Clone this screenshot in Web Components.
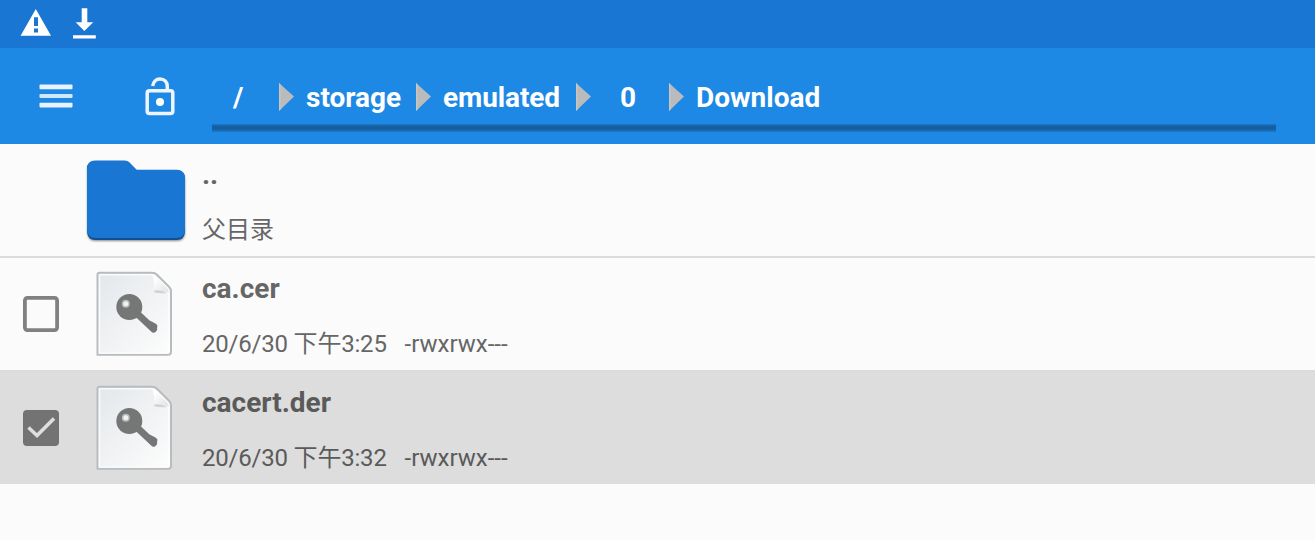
<!DOCTYPE html>
<html lang="zh-CN">
<head>
<meta charset="utf-8">
<title>Download</title>
<style>
body{margin:0;background:#fbfbfb;font-family:Roboto,"Noto Sans CJK SC",sans-serif;overflow:hidden}
.date{letter-spacing:-.2px}
</style>
</head>
<body>
<file-manager></file-manager>
<script>
function define(name, html){
  const t=document.createElement('template');
  t.innerHTML=html;
  customElements.define(name, class extends HTMLElement{
    constructor(){super();this.attachShadow({mode:'open'}).append(t.content.cloneNode(true));}
  });
}

define('status-bar',`
<style>
:host{display:flex;height:48px;background:#1976d2}
svg{display:block}
</style>
<svg width="110" height="48" viewBox="0 0 110 48" fill="#fff">
  <path fill-rule="evenodd" d="M35.8 9 51 35.8H20.6ZM34 17.3V26h4v-8.700ZM34 28.500v4h4v-4Z"/>
  <path d="M81.700 8.300h5.600v14h6L84.300 31l-8.600-8.700h6ZM73 35.200h22.800v3.300H73Z"/>
</svg>`);

define('menu-icon',`
<style>:host{display:block}svg{display:block}</style>
<svg width="34" height="24" viewBox="0 0 34 24" fill="#fff">
  <rect x=".5" y=".6" width="33" height="4.600" rx=".8" opacity=".9"/>
  <rect x=".5" y="9.900" width="33" height="4.200" rx=".8" opacity=".8"/>
  <rect x=".5" y="18.800" width="33" height="4.600" rx=".8" opacity=".9"/>
</svg>`);

define('lock-icon',`
<style>:host{display:block}svg{display:block}</style>
<svg width="32" height="40" viewBox="0 0 32 40" fill="none" stroke="#fff" stroke-opacity=".92" stroke-width="3.500">
  <rect x="3.200" y="14.800" width="25.600" height="22.700" rx="2.200"/>
  <path d="M8.700 10C9.200 5.800 12.100 2.900 16 2.900c4.300 0 7.300 3.200 7.300 7.500V13"/>
  <circle cx="16" cy="26" r="4" fill="#fff" stroke="none"/>
</svg>`);

define('path-crumb',`
<style>
:host{display:flex;align-items:center;box-sizing:border-box;height:34px;flex:none;color:#fff;font-size:28px;line-height:34px;font-weight:700;white-space:nowrap}
svg{display:block;flex:none;margin-right:var(--gap,12px)}
span{padding-top:2px}
:host([root]) svg{display:none}
</style>
<svg width="15" height="28" viewBox="0 0 15 28"><path d="M0 0 15 13.500 0 28Z" fill="#b9bbbd"/><path d="M0 0 1.500 1.200V26.500L0 28Z" fill="#c9c5c2"/></svg>
<span><slot></slot></span>`);

define('path-bar',`
<style>
:host{display:flex;box-sizing:border-box;height:96px;background:#1e88e5;padding-left:39px}
menu-icon{margin-top:36px}
lock-icon{margin:28px 0 0 71px}
nav{display:flex;align-items:center;box-sizing:border-box;width:1064px;height:84px;margin-left:36px;padding:17px 0 4px 21px;
background:linear-gradient(#1b79cc,#165f9f 30%,#165f9f 65%,#1b79cc) left bottom/100% 8px no-repeat}
</style>
<menu-icon></menu-icon><lock-icon></lock-icon>
<nav>
  <path-crumb root style="width:46px">/</path-crumb>
  <path-crumb style="width:137px">storage</path-crumb>
  <path-crumb style="width:160px;letter-spacing:-.1px">emulated</path-crumb>
  <path-crumb style="width:93px;--gap:29px">0</path-crumb>
  <path-crumb>Download</path-crumb>
</nav>`);

define('folder-icon',`
<style>:host{display:block}svg{display:block}</style>
<svg width="112" height="112" viewBox="2 0 112 112">
  <defs><filter id="s" x="-10%" y="-10%" width="120%" height="125%"><feGaussianBlur stdDeviation="1.300"/></filter></defs>
  <path d="M15 18.500h32.500q2 0 3.500 1.500l7.500 7.500H99q8 .5 8 8.500v52q0 9-8 9H17.500q-8 0-8-9V26q0-7.500 7.500-8.500Z" fill="#555" opacity=".7" filter="url(#s)"/>
  <path d="M17.500 17h29q3 0 4.500 1.500l7.500 7.500h40.500q8 .5 8 9v51.500q0 9.500-8.500 9.500h-81q-8.500 0-8.500-9.500V25q0-8 8.500-8Z" fill="#104f8f"/>
  <path d="M17.500 16.500h29q3 0 4.500 1.500l7.500 7.800h40.500q8 .5 8 8.500V85q0 9-8.500 9h-81q-8.500 0-8.500-9V25q0-8.500 8.500-8.500Z" fill="#1976d2"/>
</svg>`);

define('key-file-icon',`
<style>:host{display:block}svg{display:block}</style>
<svg width="112" height="112" viewBox="2 0 112 112">
  <defs>
    <linearGradient id="p" x1="0" y1="0" x2="1" y2="1"><stop stop-color="#e3e7ea"/><stop offset=".55" stop-color="#f2f3f5"/><stop offset="1" stop-color="#fdfdfd"/></linearGradient>
    <linearGradient id="c" x1="0" y1="0" x2="1" y2="1"><stop offset=".2" stop-color="#fff"/><stop offset="1" stop-color="#dfe1e2"/></linearGradient>
  </defs>
  <path d="M21.500 14.700H74q3 0 5 2l12 12q2 2 2 5v60q0 3-3 3H19.500V16.700q0-2 2-2Z" fill="url(#p)" stroke="#b7bcc0" stroke-width="2"/>
  <path d="M21.500 16.700H74q2 0 4 2l11 11q2 2 2 5v58.500q0 2-2 2H21.500Z" fill="none" stroke="#fff" stroke-width="1.600" opacity=".75"/>
  <path d="M74 17q2 3 2 7v9q9-.5 15 1-1-3-3-5L78 19q-2-2-4-2Z" fill="url(#c)"/>
  <path d="M76 32.500q8-1 13 2.500-7 .8-12.500-.5Z" fill="#d0d2d3"/>
  <path d="M58 54.500 75.500 71M71 66l4.800 2.500" stroke="#747776" stroke-width="7" stroke-linecap="round"/>
  <circle cx="51.300" cy="49" r="13" fill="#747776"/>
  <circle cx="47.800" cy="45.800" r="4" fill="#b9bbba"/><circle cx="47.800" cy="45.800" r="2.500" fill="#f0f1f1"/>
</svg>`);

define('check-box',`
<style>
:host{display:block}svg{display:block}
.on{display:none}
:host([checked]) .on{display:block}
:host([checked]) .off{display:none}
</style>
<svg width="36" height="36" viewBox="0 0 36 36">
  <rect class="off" x="1.900" y="1.900" width="32.200" height="32.200" rx="2.500" fill="none" stroke="#818181" stroke-width="3.800"/>
  <g class="on"><rect width="36" height="36" rx="4" fill="#737373"/><path d="M5.500 17.500 14 25.500 31 8.500" fill="none" stroke="#dedede" stroke-width="3.600"/></g>
</svg>`);

define('file-row',`
<style>
:host{display:grid;grid-template-columns:57px 112px 1fr;box-sizing:border-box;padding-left:23px;height:114px;border-top:2px solid #dcdcdc;color:#666}
:host([first]){height:112px;border-top:0}
:host([selected]){background:#ddd;color:#5a5a5a}
.check{padding-top:38px}
.text{padding:14px 0 0 10px}
.name{font-size:28px;line-height:34px;font-weight:700;height:58px}
.info{font-size:24px;line-height:28px;height:28px;white-space:pre}
::slotted(.date){letter-spacing:-.2px}
</style>
<div class="check"><slot name="check"></slot></div>
<slot name="icon"></slot>
<div class="text"><div class="name"><slot name="name"></slot></div><div class="info"><slot name="date"></slot><slot name="info"></slot></div></div>`);

define('file-manager',`
<style>:host{display:block;height:540px}</style>
<status-bar></status-bar>
<path-bar></path-bar>
<main>
  <file-row first><folder-icon slot="icon"></folder-icon><span slot="name">..</span><span slot="info">父目录</span></file-row>
  <file-row><check-box slot="check"></check-box><key-file-icon slot="icon"></key-file-icon><span slot="name">ca.cer</span><span slot="date" class="date">20/6/30 下午3:25</span><span slot="info">   -rwxrwx---</span></file-row>
  <file-row selected><check-box slot="check" checked></check-box><key-file-icon slot="icon"></key-file-icon><span slot="name">cacert.der</span><span slot="date" class="date">20/6/30 下午3:32</span><span slot="info">   -rwxrwx---</span></file-row>
</main>`);
</script>
</body>
</html>
